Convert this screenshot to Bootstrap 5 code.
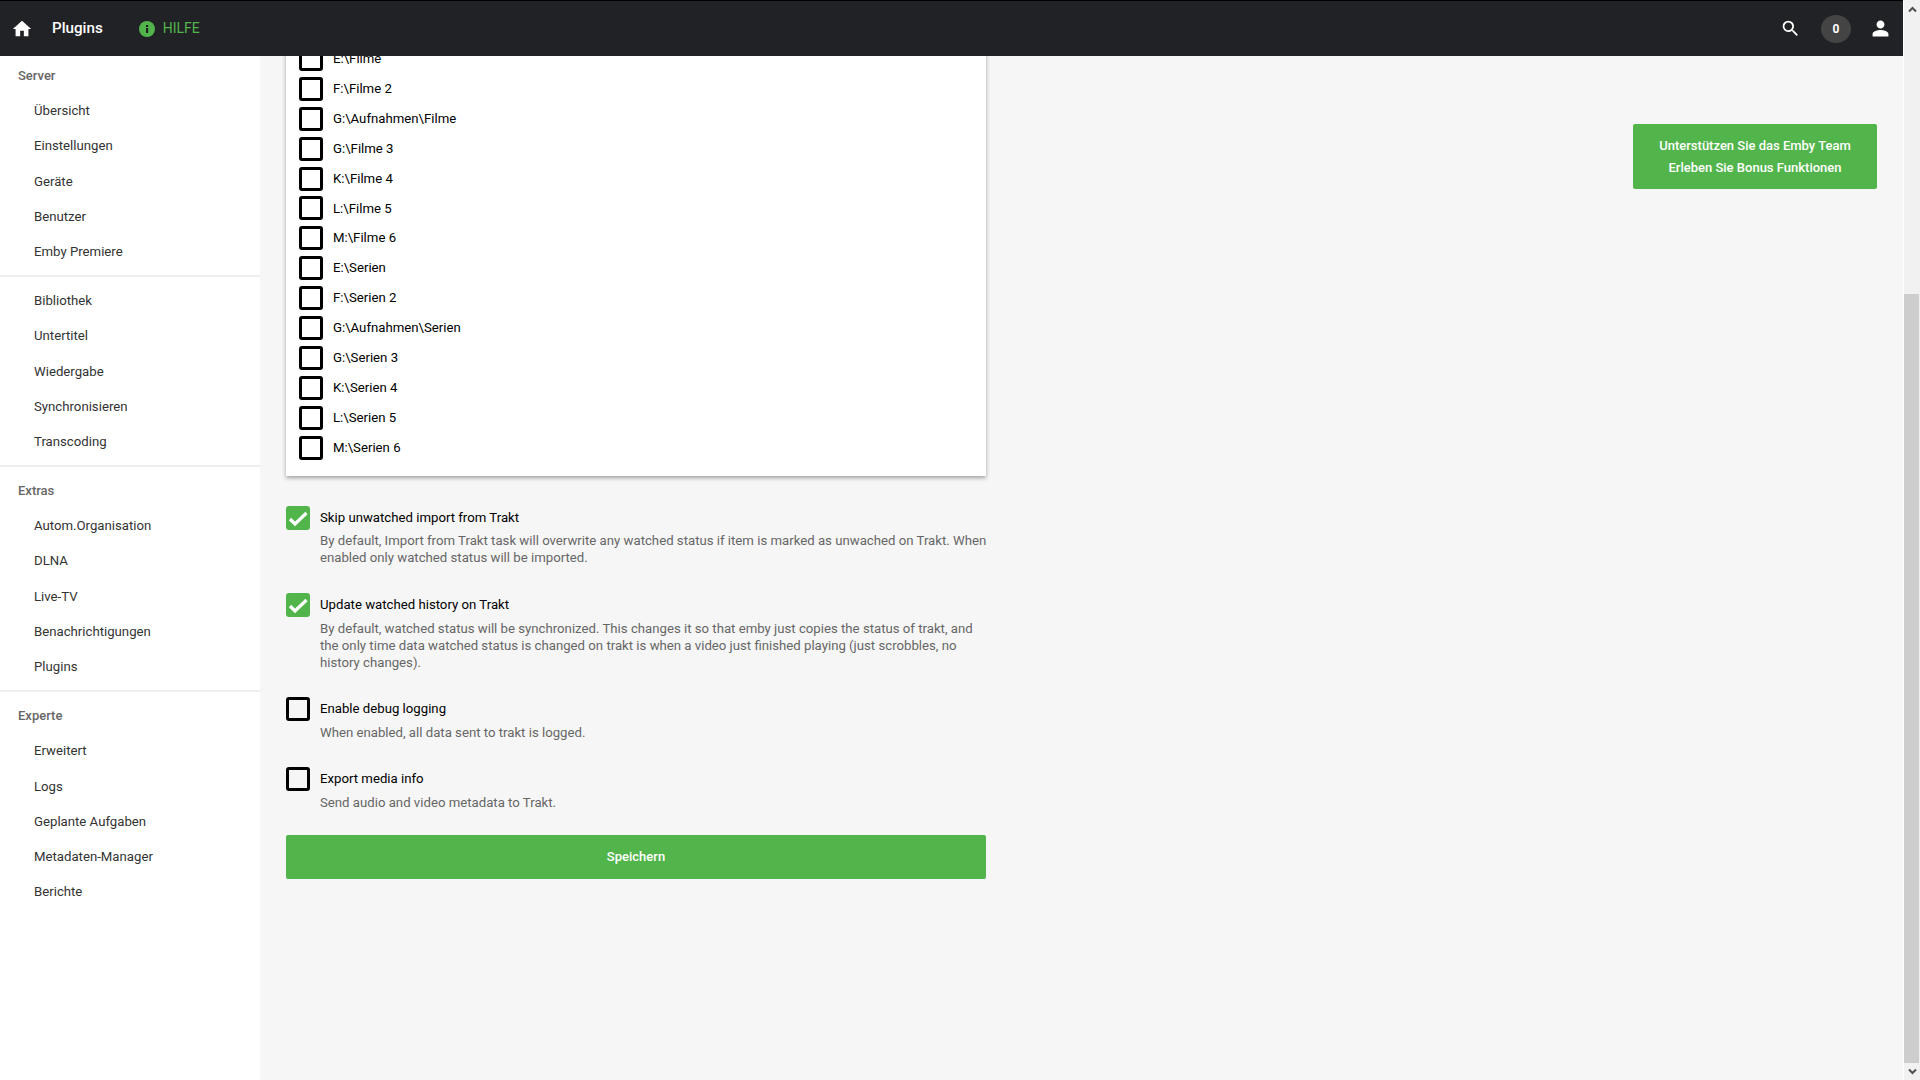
<!DOCTYPE html>
<html lang="de">
<head>
<meta charset="utf-8">
<title>Plugins</title>
<link rel="stylesheet" href="https://cdn.jsdelivr.net/npm/bootstrap@5.3.0/dist/css/bootstrap.min.css">
<style>
html,body{height:100%;overflow:hidden}
body{font-family:Roboto,"Liberation Sans",sans-serif;font-size:13.2px;background:#f6f6f6;color:#000}
.shell{height:1080px}
.page-col{min-width:0}
.topbar{height:56px;background:#212226;border-top:1px solid #000;padding:0 13px 0 11px;flex:none;position:relative;z-index:2}
.top-title{font-size:15.2px;font-weight:500;color:#fff;margin-left:19px}
.help-link{margin-left:36px;color:#52b54b;font-size:14px;text-decoration:none;gap:8px}
.count-pill{width:30px;height:28px;border-radius:50%;background:#444;color:#fff;font-size:12px;font-weight:700;margin:0 20px}
.body-row{min-height:0}
.side{width:260px;background:#fff;flex:none;padding-top:2px}
.side-head,.side-link{height:35.2px;line-height:35.2px;display:block;text-decoration:none;white-space:nowrap}
.side-head{padding-left:18px;color:#666;font-weight:500;font-size:13px}
.side-link{padding-left:34px;color:#333;font-size:13.2px}
.side-rule{margin:6px 0 6px;border-top:2px solid #eee;opacity:1}
.main-pane{min-width:0;overflow:hidden;padding-left:26px}
.form-col{width:700px;flex:none}
.path-box{margin-top:-12px;background:#fff;border-radius:0;padding:0 13px 13px;box-shadow:0 2px 4px rgba(0,0,0,.35)}
.path-row{height:29.92px;gap:10px;color:#000;font-size:13.2px}
.emby-check.form-check-input{width:24px;height:24px;margin:0;flex:none;border:3px solid #000;border-radius:3px;background-color:transparent;box-shadow:none}
.emby-check.form-check-input:checked{background-color:#52b54b;border:0;background-size:100% 100%;background-image:url("data:image/svg+xml,%3Csvg xmlns='http://www.w3.org/2000/svg' viewBox='0 0 24 24'%3E%3Cpath d='M4 13l5 5L20.5 7' fill='none' stroke='%23fff' stroke-width='3.2'/%3E%3C/svg%3E")}
.opt-head{gap:10px;height:24px;color:#000;font-size:13.2px}
.opt-help{margin:2.5px -6px 0 34px;color:#666;font-size:13.2px;line-height:17px}
.opt-a{margin-top:30px}
.opt-b{margin-top:27px}
.opt-c,.opt-d{margin-top:26.5px}
.save-btn{display:block;width:100%;height:44px;margin-top:24.5px;background:#52b54b;border:0;border-radius:2px;color:#fff;font-weight:500;font-size:13px}
.promo-col{width:244px;margin-left:auto;margin-right:26px;padding-top:68px;flex:none}
.promo{display:block;background:#52b54b;color:#fff;font-weight:500;font-size:13px;line-height:22px;text-align:center;padding:11px 0 10px;border-radius:2px;text-decoration:none}
.scroll-track{width:17px;background:#f1f1f1;border-left:1px solid #fff;flex:none;padding-top:1px}
.scroll-arrow{height:17px;flex:none}
.scroll-gap{height:276px;flex:none}
.scroll-thumb{background:#cdcdcd;min-height:0;margin-right:1px}
</style>
</head>
<body>
<div class="shell d-flex">
  <div class="page-col flex-grow-1 d-flex flex-column">
    <header class="topbar d-flex align-items-center">
      <svg width="22" height="22" viewBox="0 0 24 24" fill="#fff"><path d="M10 20v-6h4v6h5v-8h3L12 3 2 12h3v8z"/></svg>
      <span class="top-title">Plugins</span>
      <a class="help-link d-inline-flex align-items-center" href="#">
        <svg width="16" height="16" viewBox="0 0 16 16"><circle cx="8" cy="8" r="8" fill="#52b54b"/><rect x="7" y="7" width="2.2" height="5" fill="#212226"/><rect x="7" y="4" width="2.2" height="2" fill="#212226"/></svg>
        HILFE
      </a>
      <div class="ms-auto d-flex align-items-center">
        <svg width="21" height="21" viewBox="0 0 24 24" fill="#fff"><path d="M15.5 14h-.79l-.28-.27A6.47 6.47 0 0 0 16 9.5 6.5 6.5 0 1 0 9.5 16c1.61 0 3.09-.59 4.23-1.57l.27.28v.79l5 4.99L20.49 19l-4.99-5zm-6 0C7.01 14 5 11.99 5 9.5S7.01 5 9.5 5 14 7.01 14 9.5 11.99 14 9.5 14z"/></svg>
        <span class="count-pill d-inline-flex align-items-center justify-content-center">0</span>
        <svg width="19" height="19" viewBox="0 0 24 24" fill="#fff"><path d="M12 12c2.76 0 5-2.24 5-5s-2.24-5-5-5-5 2.24-5 5 2.24 5 5 5zm0 2c-3.34 0-10 1.68-10 5v3h20v-3c0-3.32-6.66-5-10-5z"/></svg>
      </div>
    </header>
    <div class="body-row d-flex flex-grow-1">
      <nav class="side">
        <div class="side-head">Server</div>
        <a class="side-link" href="#">Übersicht</a>
        <a class="side-link" href="#">Einstellungen</a>
        <a class="side-link" href="#">Geräte</a>
        <a class="side-link" href="#">Benutzer</a>
        <a class="side-link" href="#">Emby Premiere</a>
        <hr class="side-rule">
        <a class="side-link" href="#">Bibliothek</a>
        <a class="side-link" href="#">Untertitel</a>
        <a class="side-link" href="#">Wiedergabe</a>
        <a class="side-link" href="#">Synchronisieren</a>
        <a class="side-link" href="#">Transcoding</a>
        <hr class="side-rule">
        <div class="side-head">Extras</div>
        <a class="side-link" href="#">Autom.Organisation</a>
        <a class="side-link" href="#">DLNA</a>
        <a class="side-link" href="#">Live-TV</a>
        <a class="side-link" href="#">Benachrichtigungen</a>
        <a class="side-link" href="#">Plugins</a>
        <hr class="side-rule">
        <div class="side-head">Experte</div>
        <a class="side-link" href="#">Erweitert</a>
        <a class="side-link" href="#">Logs</a>
        <a class="side-link" href="#">Geplante Aufgaben</a>
        <a class="side-link" href="#">Metadaten-Manager</a>
        <a class="side-link" href="#">Berichte</a>
      </nav>
      <main class="main-pane flex-grow-1 d-flex">
        <div class="form-col">
          <div class="path-box">
            <label class="path-row d-flex align-items-center"><input class="emby-check form-check-input" type="checkbox">E:\Filme</label>
            <label class="path-row d-flex align-items-center"><input class="emby-check form-check-input" type="checkbox">F:\Filme 2</label>
            <label class="path-row d-flex align-items-center"><input class="emby-check form-check-input" type="checkbox">G:\Aufnahmen\Filme</label>
            <label class="path-row d-flex align-items-center"><input class="emby-check form-check-input" type="checkbox">G:\Filme 3</label>
            <label class="path-row d-flex align-items-center"><input class="emby-check form-check-input" type="checkbox">K:\Filme 4</label>
            <label class="path-row d-flex align-items-center"><input class="emby-check form-check-input" type="checkbox">L:\Filme 5</label>
            <label class="path-row d-flex align-items-center"><input class="emby-check form-check-input" type="checkbox">M:\Filme 6</label>
            <label class="path-row d-flex align-items-center"><input class="emby-check form-check-input" type="checkbox">E:\Serien</label>
            <label class="path-row d-flex align-items-center"><input class="emby-check form-check-input" type="checkbox">F:\Serien 2</label>
            <label class="path-row d-flex align-items-center"><input class="emby-check form-check-input" type="checkbox">G:\Aufnahmen\Serien</label>
            <label class="path-row d-flex align-items-center"><input class="emby-check form-check-input" type="checkbox">G:\Serien 3</label>
            <label class="path-row d-flex align-items-center"><input class="emby-check form-check-input" type="checkbox">K:\Serien 4</label>
            <label class="path-row d-flex align-items-center"><input class="emby-check form-check-input" type="checkbox">L:\Serien 5</label>
            <label class="path-row d-flex align-items-center"><input class="emby-check form-check-input" type="checkbox">M:\Serien 6</label>
          </div>
          <div class="opt-a">
            <label class="opt-head d-flex align-items-center"><input class="emby-check form-check-input" type="checkbox" checked>Skip unwatched import from Trakt</label>
            <div class="opt-help">By default, Import from Trakt task will overwrite any watched status if item is marked as unwached on Trakt. When enabled only watched status will be imported.</div>
          </div>
          <div class="opt-b">
            <label class="opt-head d-flex align-items-center"><input class="emby-check form-check-input" type="checkbox" checked>Update watched history on Trakt</label>
            <div class="opt-help">By default, watched status will be synchronized. This changes it so that emby just copies the status of trakt, and the only time data watched status is changed on trakt is when a video just finished playing (just scrobbles, no history changes).</div>
          </div>
          <div class="opt-c">
            <label class="opt-head d-flex align-items-center"><input class="emby-check form-check-input" type="checkbox">Enable debug logging</label>
            <div class="opt-help">When enabled, all data sent to trakt is logged.</div>
          </div>
          <div class="opt-d">
            <label class="opt-head d-flex align-items-center"><input class="emby-check form-check-input" type="checkbox">Export media info</label>
            <div class="opt-help">Send audio and video metadata to Trakt.</div>
          </div>
          <button class="save-btn btn" type="button">Speichern</button>
        </div>
        <div class="promo-col">
          <a class="promo" href="#">Unterstützen Sie das Emby Team<br>Erleben Sie Bonus Funktionen</a>
        </div>
      </main>
    </div>
  </div>
  <div class="scroll-track d-flex flex-column">
    <div class="scroll-arrow d-flex align-items-center justify-content-center"><svg width="9" height="7" viewBox="0 0 9 7"><path d="M1 5.5 4.5 2 8 5.5" fill="none" stroke="#505050" stroke-width="2"/></svg></div>
    <div class="scroll-gap"></div>
    <div class="scroll-thumb flex-grow-1"></div>
    <div class="scroll-arrow d-flex align-items-center justify-content-center"><svg width="9" height="7" viewBox="0 0 9 7"><path d="M1 1.5 4.5 5 8 1.5" fill="none" stroke="#505050" stroke-width="2"/></svg></div>
  </div>
</div>
<script src="https://cdn.jsdelivr.net/npm/bootstrap@5.3.0/dist/js/bootstrap.bundle.min.js"></script>
</body>
</html>
